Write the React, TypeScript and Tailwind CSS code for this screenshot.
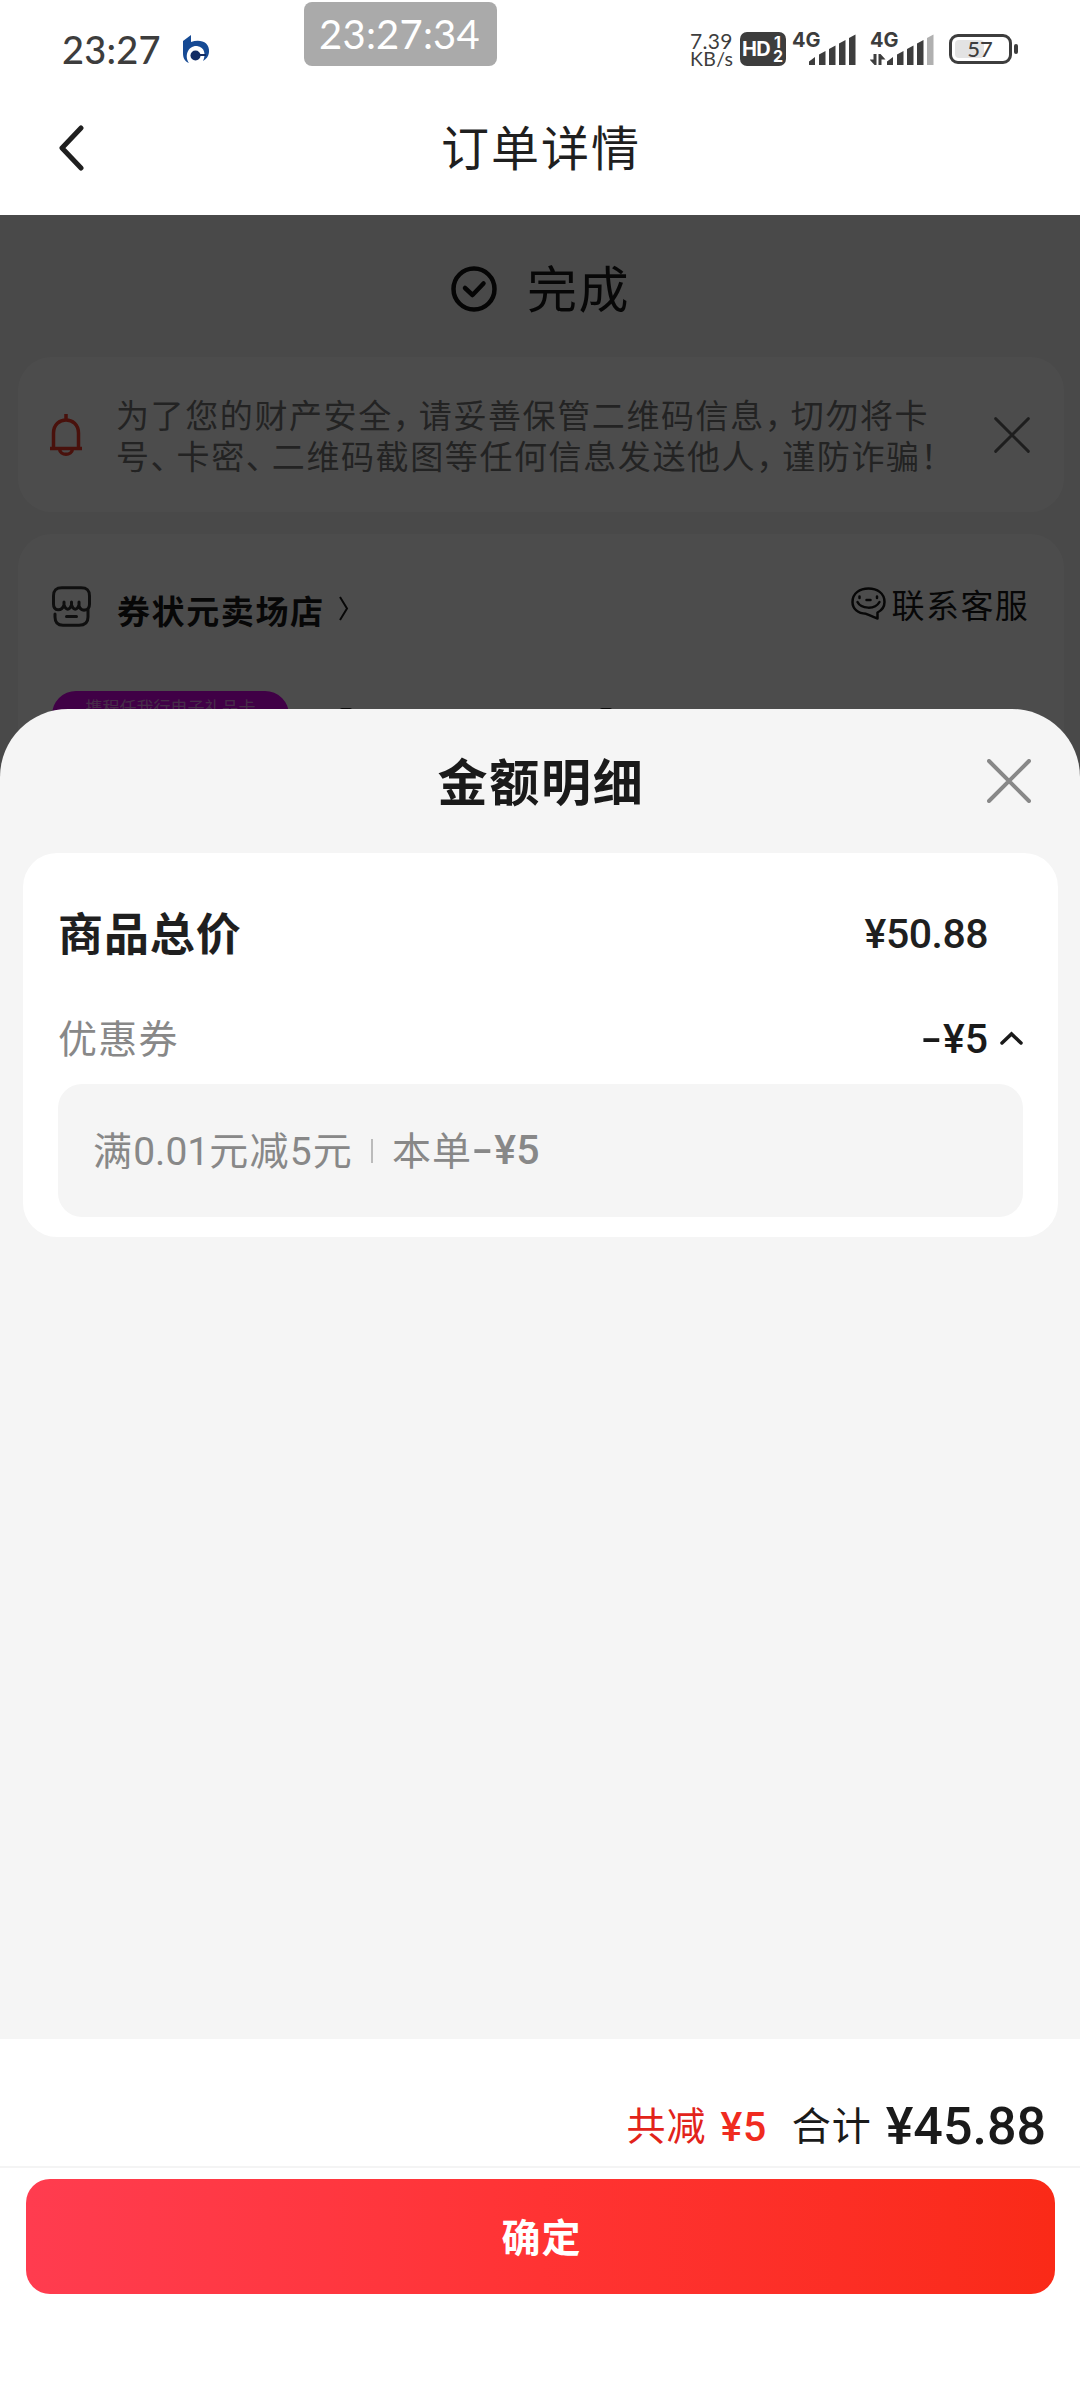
import React from "react";

const Cross = ({ className, w = 4 }: { className: string; w?: number }) => (
  <svg className={className} viewBox="0 0 44 44" preserveAspectRatio="none" fill="none" stroke="currentColor" strokeWidth={w} strokeLinecap="round">
    <path d="M2 2 42 42M42 2 2 42" />
  </svg>
);

const Signal = ({ dim, arrows }: { dim?: boolean; arrows?: boolean }) => (
  <div className="relative h-[34px] w-[66px] text-[#3d3d3d]">
    <span className="absolute left-0 top-[-1px] font-[Inter] text-[20px] leading-[19px] font-bold">4G</span>
    <svg className="absolute inset-0" width="66" height="34" viewBox="0 0 66 34" fill="currentColor">
      {arrows && <path d="M3.500 22H6.500V33H4.500L-0.500 27.500H3.500ZM8.500 33V22H10.500L15.500 27.500H11.500V33Z" />}
      <path d="M17 29.5 23 25V33H17ZM27 22.5 33.5 19V33H27ZM37 17 43.5 13.5V33H37ZM47 11.5 53.5 8V33H47Z" />
      <path d="M57 6 63.5 2.5V33H57Z" fill={dim ? "#b0b0b0" : "currentColor"} />
    </svg>
  </div>
);

/* Full-width punctuation set on a narrower advance */
const P = ({ children }: { children: string }) => (
  <span className="tracking-[9.5px] [font-feature-settings:'halt']">{children}</span>
);

const Minus = () => <span className="mr-[1px] inline-block origin-right scale-x-150">-</span>;

function StatusBar() {
  return (
    <div className="relative flex h-[80px] shrink-0 items-start text-[#3d3d3d]">
      <span className="mt-[29px] ml-[62px] w-[121px] font-[Lato] text-[38px] leading-[40px] font-medium tracking-[0.2px]">23:27</span>
      <svg className="mt-[35px]" width="27" height="29" viewBox="0 0 27 29">
        <path d="M0 6 8 0V7C17 3.500 27 7 26 17C25.500 22 23 24 20 26C23 20 22 12 14 11C5 10.500 1 21 6 28C1 26 0 22 0 18Z" fill="#164a94" />
        <circle cx="12.500" cy="20.500" r="5" fill="#122c63" />
        <path d="M16 20H23" stroke="#122c63" strokeWidth="2" />
      </svg>
      <div className="absolute left-[304px] top-[2px] flex h-[64px] w-[193px] items-center justify-center rounded-[8px] bg-[#aaaaaa] font-[Lato] text-[40px] leading-none text-white">
        <span className="mr-[2px] tracking-[0.2px]">23:27:34</span>
      </div>
      <div className="mt-[32px] ml-[480px] w-[50px] font-[Lato] text-[21px] leading-[18px]">
        <div className="tracking-[0.3px]">7.39</div>
        <div className="text-[19.5px] tracking-[0.3px]">KB/s</div>
      </div>
      <div className="relative mt-[32px] h-[34px] w-[46px] rounded-[7px] bg-[#3d3d3d] font-[Inter] font-bold text-white">
        <span className="absolute left-[2px] top-[8px] text-[20px] leading-[19px] tracking-[-0.8px]">HD</span>
        <span className="absolute left-[34px] top-[3px] text-[16px] leading-[14px]">1</span>
        <span className="absolute left-[33px] top-[17px] text-[16px] leading-[14px]">2</span>
      </div>
      <div className="mt-[32px] ml-[6px]"><Signal /></div>
      <div className="mt-[32px] ml-[12px]"><Signal dim arrows /></div>
      <div className="relative mt-[34px] ml-[13px] flex h-[30px] w-[63px] items-center justify-center rounded-[9px] border-[3px] border-[#3d3d3d]">
        <div className="absolute left-[3px] top-[3px] h-[18px] w-[29px] rounded-[4px] bg-[#e3e3e3]" />
        <span className="relative mr-[1px] font-[Lato] text-[22px] leading-none font-medium">57</span>
      </div>
      <div className="mt-[44px] ml-[2px] h-[10px] w-[4px] rounded-[2px] bg-[#3d3d3d]" />
    </div>
  );
}

function OrderPage() {
  return (
    <div className="relative h-[600px] shrink-0 overflow-hidden bg-[#f5f5f5] pr-[16px] pl-[18px]">
      <div className="flex h-[142px] items-center pt-[6px] pl-[433px]">
        <svg width="46" height="46" viewBox="0 0 46 46" fill="none" stroke="#111" strokeWidth="4.5" strokeLinecap="round" strokeLinejoin="round">
          <circle cx="23" cy="23" r="20.500" />
          <path d="M14 22 21.500 29 32.500 17.500" />
        </svg>
        <span className="mb-[7px] ml-[30px] text-[50px] leading-none tracking-[1.5px] text-[#1a1a1a]">完成</span>
      </div>
      <div className="flex h-[155px] items-center rounded-[34px] bg-white pl-[32px]">
        <svg width="32" height="44" viewBox="0 0 32 44" fill="none" stroke="#f33a28" strokeWidth="3.500">
          <path d="M16 1V7M3.500 35V20C3.500 2.500 28.500 2.500 28.500 20V35M0 35.500H32M9.500 36C10 43 22 43 22.500 36" />
        </svg>
        <div className="ml-[34px] w-[878px] text-[33px] leading-[41px] tracking-[1.6px] whitespace-nowrap text-[#777]">
          <div>为了您的财产安全<P>，</P>请妥善保管二维码信息<P>，</P>切勿将卡</div>
          <div>号<P>、</P>卡密<P>、</P>二维码截图等任何信息发送他人<P>，</P>谨防诈骗！</div>
        </div>
        <Cross className="h-[36px] w-[36px] text-[#666]" w={3.5} />
      </div>
      <div className="mt-[22px] h-[300px] rounded-t-[34px] bg-white">
        <div className="flex h-[157px] items-start pl-[34px]">
          <svg className="mt-[52px]" width="39" height="41" viewBox="0 0 39 41" fill="none" stroke="#333" strokeWidth="3" strokeLinecap="round" strokeLinejoin="round">
            <path d="M1.500 18V10C1.500 4 4 1.700 10 1.700H29C35 1.700 37.500 4 37.500 10V18C37.500 25.500 29 26 27 20V16M1.500 18C1.500 25.500 10 25.500 12 19V16M12 19C14 24.500 17.500 24.500 19.500 19V16M19.500 19C21.500 24.500 25 24.500 27 19M3 28V31C3 37 6 39.300 11 39.300H27C33 39.300 36 37 36 31V23M14.500 30.500H24.500" />
          </svg>
          <span className="mt-[55px] ml-[26px] text-[33px] leading-[42px] font-bold tracking-[1.6px] text-[#1a1a1a]">券状元卖场店</span>
          <svg className="mt-[62px] ml-[14px]" width="10" height="25" viewBox="0 0 10 25" fill="none" stroke="#1a1a1a" strokeWidth="2"><path d="M1 1 8 12.500 1 24" /></svg>
          <svg className="mt-[53px] ml-[502px]" width="35" height="33" viewBox="0 0 35 33" fill="none" stroke="#1a1a1a" strokeWidth="2.500" strokeLinecap="round" strokeLinejoin="round">
            <path d="M26.500 31.500C22 30 18 28 15 26.800C7 26.500 1.500 22 1.500 15C1.500 6 9 1.500 17.500 1.500S33.500 6 33.500 15C33.500 20 30.500 23.500 26.500 25.500Z" />
            <path d="M6.500 15C10 22 24 23 28.500 15M15.500 13H19.500M8.500 9.500V11M26 9.500V11" />
          </svg>
          <span className="mt-[49px] ml-[6px] text-[33px] leading-[42px] tracking-[1.4px] text-[#1a1a1a]">联系客服</span>
        </div>
        <div className="flex items-start pl-[34px]">
          <div className="flex h-[100px] w-[237px] justify-center rounded-[24px] bg-[#d500e9] pt-[6px] text-[17px] leading-[20px] text-white/60">携程任我行电子礼品卡</div>
          <div className="mt-[17px] ml-[51px] h-[4px] w-[12px] rounded-full bg-[#222]" />
          <div className="mt-[17px] ml-[248px] h-[4px] w-[12px] rounded-full bg-[#222]" />
        </div>
      </div>
      <div className="absolute inset-0 bg-black/70" />
    </div>
  );
}

function AmountSheet() {
  return (
    <div className="absolute inset-x-0 top-[709px] bottom-0 flex flex-col overflow-hidden rounded-t-[68px] bg-[#f5f5f5]">
      <div className="relative flex h-[144px] shrink-0 items-center justify-center pb-[4px] pl-[2px]">
        <h2 className="text-[50px] leading-none font-bold tracking-[1.8px] text-[#1a1a1a]">金额明细</h2>
        <Cross className="absolute top-[50px] right-[49px] h-[44px] w-[44px] text-[#888]" />
      </div>
      <div className="mr-[22px] ml-[23px] h-[384px] shrink-0 rounded-[34px] bg-white px-[35px]">
        <div className="flex h-[160px] items-center justify-between pr-[35px] text-[#1f1f1f]">
          <span className="mb-[4px] text-[45px] leading-none font-bold tracking-[0.9px]">商品总价</span>
          <span className="mt-[2px] font-[Roboto] text-[41px] leading-none font-medium tracking-[-0.5px]">¥50.88</span>
        </div>
        <div className="flex h-[71px] items-start">
          <span className="-mt-[3px] flex-1 text-[39px] leading-[52px] tracking-[1.2px] text-[#888]">优惠券</span>
          <span className="font-[Roboto] text-[41px] leading-[52px] font-medium text-[#1a1a1a]"><Minus />¥5</span>
          <svg className="mt-[18px] ml-[12px]" width="23" height="14" viewBox="0 0 23 14" fill="none" stroke="#1a1a1a" strokeWidth="3.500" strokeLinecap="round"><path d="M2 12 11.500 3 21 12" /></svg>
        </div>
        <div className="flex h-[133px] items-center rounded-[24px] bg-[#f5f5f5] pl-[35px] text-[39px] leading-none whitespace-nowrap text-[#888]">
          <span className="mb-px tracking-[1.2px]">满<span className="font-[Roboto] tracking-[0px]">0.01</span>元减<span className="font-[Roboto]">5</span>元</span>
          <div className="ml-[18px] h-[24px] w-[2px] bg-[#bbb]" />
          <span className="mb-[4px] ml-[19px] tracking-[1px]">本单</span>
          <span className="ml-[7px] font-[Roboto] text-[41px] font-medium tracking-[0.3px]"><Minus />¥5</span>
        </div>
      </div>
      <div className="flex-1" />
      <div className="flex h-[361px] shrink-0 flex-col bg-white">
        <div className="flex h-[129px] shrink-0 items-end justify-end border-b-2 border-[#f4f4f4] pr-[34px] pb-[14px] whitespace-nowrap">
          <span className="mb-[3px] text-[39px] leading-[52px] tracking-[1px] text-[#e2231a]">共减</span>
          <span className="ml-[14px] font-[Roboto] text-[41px] leading-[50px] font-medium tracking-[0.5px] text-[#f02b20]">¥5</span>
          <span className="mb-[3px] ml-[25px] text-[39px] leading-[52px] tracking-[1px] text-[#1a1a1a]">合计</span>
          <span className="ml-[14px] font-[Roboto] text-[52px] leading-[50px] font-medium text-[#1a1a1a]">¥45.88</span>
        </div>
        <button className="mt-[11px] mr-[25px] ml-[26px] flex h-[115px] items-center justify-center rounded-[24px] bg-linear-to-r from-[#ff3c4f] via-[#ff3333] to-[#fa2a17] pb-[3px] pl-[2px] text-[39px] leading-none font-bold tracking-[1px] text-white">确定</button>
      </div>
    </div>
  );
}

export default function App() {
  return (
    <div className="relative flex h-[2400px] w-[1080px] flex-col overflow-hidden bg-white font-['Noto_Sans_CJK_SC',sans-serif]">
      <StatusBar />
      <header className="relative flex h-[135px] shrink-0 items-center justify-center pb-[5px] pl-[2px] text-[#1f1f1f]">
        <svg className="absolute top-[45px] left-[58px]" width="26" height="46" viewBox="0 0 26 46" fill="none" stroke="currentColor" strokeWidth="5" strokeLinecap="round" strokeLinejoin="round"><path d="M23 3 4 23 23 43" /></svg>
        <h1 className="text-[48px] leading-none tracking-[2px]">订单详情</h1>
      </header>
      <OrderPage />
      <AmountSheet />
    </div>
  );
}
